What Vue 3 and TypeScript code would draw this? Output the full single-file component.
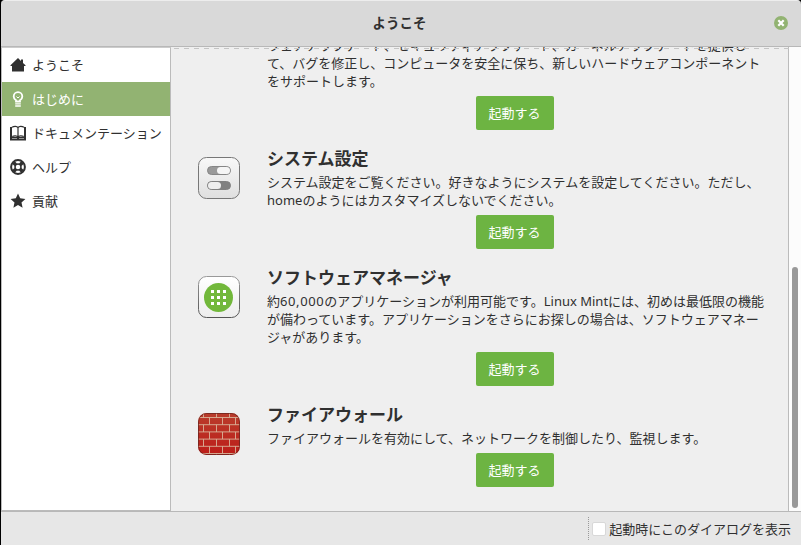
<script setup lang="ts">
interface NavItem { id: string; label: string }
interface Step { id: string; title: string; lines: string[] }

const nav: NavItem[] = [
  { id: 'home', label: 'ようこそ' },
  { id: 'bulb', label: 'はじめに' },
  { id: 'book', label: 'ドキュメンテーション' },
  { id: 'help', label: 'ヘルプ' },
  { id: 'star', label: '貢献' },
]
const active = 'bulb'

const steps: Step[] = [
  {
    id: 'update', title: '',
    lines: [
      'ウェアアップデート、セキュリティアップデート、カーネルアップデートを提供し',
      'て、バグを修正し、コンピュータを安全に保ち、新しいハードウェアコンポーネント',
      'をサポートします。',
    ],
  },
  {
    id: 'settings', title: 'システム設定',
    lines: [
      'システム設定をご覧ください。好きなようにシステムを設定してください。ただし、',
      'homeのようにはカスタマイズしないでください。',
    ],
  },
  {
    id: 'software', title: 'ソフトウェアマネージャ',
    lines: [
      '約60,000のアプリケーションが利用可能です。Linux Mintには、初めは最低限の機能',
      'が備わっています。アプリケーションをさらにお探しの場合は、ソフトウェアマネー',
      'ジャがあります。',
    ],
  },
  {
    id: 'firewall', title: 'ファイアウォール',
    lines: ['ファイアウォールを有効にして、ネットワークを制御したり、監視します。'],
  },
]

// Splits a line into number and non-number runs; numbers are set slightly wider.
const runs = (line: string): string[] => line.split(/([\d,]+)/).filter(Boolean)
const isNumber = (run: string): boolean => /^[\d,]+$/.test(run)

const dots: number[] = [14.5, 20.5, 26.5]
const courses: number[][] = [[5, 18, 31], [11, 24, 37], [5, 18, 31], [11, 24, 37], [5, 18, 31], [11, 24, 37], [5, 18, 31]]
</script>

<template>
  <div class="window">
    <header class="titlebar">
      <span class="caption">ようこそ</span>
      <svg class="close" viewBox="0 0 14 14"><circle cx="7" cy="7" r="7" fill="#92b372" /><path d="M4.3 4.300l5.400 5.400M9.700 4.300l-5.400 5.400" stroke="#fff" stroke-width="2.200" /></svg>
    </header>
    <main class="body">
      <nav class="sidebar">
        <div v-for="item in nav" :key="item.id" class="item" :class="{ active: item.id === active }">
          <svg class="glyph" viewBox="0 0 16 16">
            <path v-if="item.id === 'home'" fill="currentColor" d="M8 1 .5 8.300V9H2v5.500h12V9h1.500v-.7L13 5.900V2.500h-2V4z" />
            <g v-else-if="item.id === 'bulb'" fill="none" stroke="currentColor">
              <path stroke-width="1.800" d="M6 10.500V9.300C4.500 8.300 3.700 7.200 3.700 5.500a4.300 4.300 0 0 1 8.600 0c0 1.700-.8 2.800-2.300 3.800v1.200z" />
              <path stroke-width="1" d="M6.500 5.500 8 7l1.500-1.500" />
              <path stroke-width="1.300" d="M5.200 12.800h5.600M5.200 15h5.600" />
            </g>
            <g v-else-if="item.id === 'book'">
              <path fill="currentColor" d="M0 2h2v10h12V2h2v13.500H0z" />
              <path fill="none" stroke="currentColor" stroke-width="1.200" d="M2 2.300C4 1 7 1 8 2.600 9 1 12 1 14 2.300M8 2.500V12M2.200 11.600C4 10.500 7 10.500 8 12c1-1.500 4-1.500 5.800-.4" />
              <path stroke="#fff" stroke-width=".5" d="M2 13.500h5M9 13.500h5" />
            </g>
            <g v-else-if="item.id === 'help'" fill="none" stroke="currentColor">
              <circle cx="8" cy="8" r="6.900" stroke-width="2" />
              <circle cx="8" cy="8" r="3" stroke-width="1.500" />
              <path stroke-width="3.600" d="m3.500 3.500 2.200 2.200M12.500 3.500l-2.200 2.200M3.500 12.500l2.200-2.200M12.500 12.500l-2.200-2.200" />
            </g>
            <path v-else fill="currentColor" d="m8 .5 2.200 4.800 5.200.6-3.900 3.600 1.100 5.200L8 12.100l-4.600 2.600 1.100-5.200L.6 5.900l5.200-.6z" />
          </svg>
          <span>{{ item.label }}</span>
        </div>
      </nav>
      <section class="scroller">
        <div class="content">
          <article v-for="step in steps" :key="step.id" class="step">
            <svg v-if="step.title" class="picture" viewBox="0 0 42 42">
              <defs>
                <linearGradient id="plate" x2="0" y2="1"><stop stop-color="#f8f8f8" /><stop offset="1" stop-color="#dfdfdf" /></linearGradient>
                <linearGradient id="white" x2="0" y2="1"><stop stop-color="#fff" /><stop offset="1" stop-color="#ededed" /></linearGradient>
                <linearGradient id="rim" x2="0" y2="1"><stop stop-color="#999" /><stop offset="1" stop-color="#555" /></linearGradient>
                <linearGradient id="brick" x2="0" y2="1"><stop stop-color="#b93d2c" /><stop offset="1" stop-color="#bd1d19" /></linearGradient>
                <clipPath id="tile"><rect width="42" height="42" rx="8.500" /></clipPath>
              </defs>
              <g v-if="step.id === 'settings'">
                <rect x=".5" y=".5" width="41" height="41" rx="8" fill="url(#plate)" stroke="#777" />
                <rect x="9.500" y="9.500" width="23" height="8" rx="4" fill="#999" stroke="#858585" />
                <rect x="19" y="10" width="13" height="7" rx="3.500" fill="#f5f5f5" />
                <rect x="9.500" y="24.500" width="23" height="8" rx="4" fill="#808080" stroke="#808080" />
                <rect x="10" y="25" width="13" height="7" rx="3.500" fill="#eee" />
              </g>
              <g v-else-if="step.id === 'software'">
                <rect x=".5" y=".5" width="41" height="41" rx="8" fill="url(#white)" stroke="url(#rim)" />
                <circle cx="20.500" cy="21.500" r="14.500" fill="#72b83b" />
                <template v-for="y in dots" :key="y">
                  <rect v-for="x in dots" :key="x" :x="x - 1.5" :y="y - .5" width="3" height="3" fill="#fff" />
                </template>
              </g>
              <g v-else clip-path="url(#tile)">
                <rect width="42" height="42" fill="url(#brick)" />
                <g stroke="#d9b49b" stroke-width=".9">
                  <template v-for="(joints, row) in courses" :key="row">
                    <path :d="`M0 ${4.5 + row * 7.2}H42`" />
                    <path v-for="x in joints" :key="x" :d="`M${x + .5} ${row * 7.2 - 2.7}v7.2`" />
                  </template>
                </g>
                <rect x=".5" y=".5" width="41" height="41" rx="8" fill="none" stroke="#6d251f" stroke-opacity=".8" />
              </g>
            </svg>
            <div class="text">
              <h2 v-if="step.title">{{ step.title }}</h2>
              <div class="lines">
                <p v-for="line in step.lines" :key="line"><span v-for="(run, i) in runs(line)" :key="i" :class="{ number: isNumber(run) }">{{ run }}</span></p>
              </div>
              <button>起動する</button>
            </div>
          </article>
        </div>
        <div class="undershoot"></div>
        <div class="track"><div class="thumb"></div></div>
      </section>
    </main>
    <footer class="bottom">
      <label class="startup"><span class="box"></span>起動時にこのダイアログを表示</label>
    </footer>
  </div>
</template>

<style>
body { margin: 0; background: #000; overflow: hidden; }
</style>
<style scoped>
* { box-sizing: border-box; }
.window { width: 801px; height: 545px; display: flex; flex-direction: column; border-left: 1px solid #000; font: 13px/18px "Noto Sans", "Noto Sans CJK JP", sans-serif; color: #303030; overflow: hidden; }
.titlebar { height: 47px; flex: none; display: flex; align-items: center; padding: 0 13px 2px 24px; background: #d9d9d9; border-top: 1px solid #ededed; border-bottom: 1px solid #b8b8b8; border-radius: 4px 4px 0 0; }
.caption { flex: 1; text-align: center; font-size: 13.5px; font-weight: 700; }
.close { width: 14px; height: 14px; }
.body { flex: 1; min-height: 0; display: flex; background: #efefef; border-bottom: 1px solid #b8b8b8; }
.sidebar { width: 170px; flex: none; background: #fff; border: 1px solid #bbb; border-top-color: #ccc; }
.item { height: 34px; display: flex; align-items: center; gap: 6px; padding-left: 8px; white-space: nowrap; }
.item.active { background: #92b372; color: #fff; }
.glyph { width: 16px; height: 16px; flex: none; }
.scroller { flex: 1; min-width: 0; display: flex; position: relative; overflow: hidden; }
.content { flex: 1; min-width: 0; margin-top: -10px; display: flex; flex-direction: column; gap: 17px; }
.step { display: flex; justify-content: flex-end; flex: none; }
.picture { width: 42px; height: 42px; flex: none; margin: 10px 27px 0 0; }
.text { width: 521px; flex: none; display: flex; flex-direction: column; }
h2 { margin: 0 0 2px; height: 24px; font-size: 17px; line-height: 24px; font-weight: 700; white-space: nowrap; }
.lines { padding-bottom: 1px; }
.lines:first-child { margin-top: -1px; padding-bottom: 2px; }
p { margin: 0; height: 18px; white-space: nowrap; }
.number { letter-spacing: .6px; }
button { align-self: center; width: 78px; height: 34px; margin: 5px 26px 0 0; padding: 0 0 1px; border: 0; border-radius: 2px; background: #6db442; color: #fff; font: inherit; }
.lines:first-child + button { margin-top: 4px; }
h2 + .lines + button { margin-top: 5px; }
.undershoot { position: absolute; left: 3px; right: 12px; top: 1px; height: 1px; background: repeating-linear-gradient(90deg, #c4c4c4 0 5px, transparent 5px 10px); }
.track { width: 13px; flex: none; background: #fcfcfc; border-left: 1px solid #bbb; display: flex; flex-direction: column; justify-content: flex-end; padding: 0 3px 3px; }
.thumb { width: 6px; height: 241px; border-radius: 3px; background: #999; }
.bottom { height: 33px; flex: none; display: flex; justify-content: flex-end; align-items: center; background: #e7e7e7; padding-right: 10px; }
.startup { height: 23px; display: flex; align-items: center; border-left: 1px dotted #999; padding-left: 3px; white-space: nowrap; }
.box { width: 14px; height: 14px; margin-right: 3px; background: #fff; border: 1px solid #d8d8d8; border-radius: 2px; }
</style>
